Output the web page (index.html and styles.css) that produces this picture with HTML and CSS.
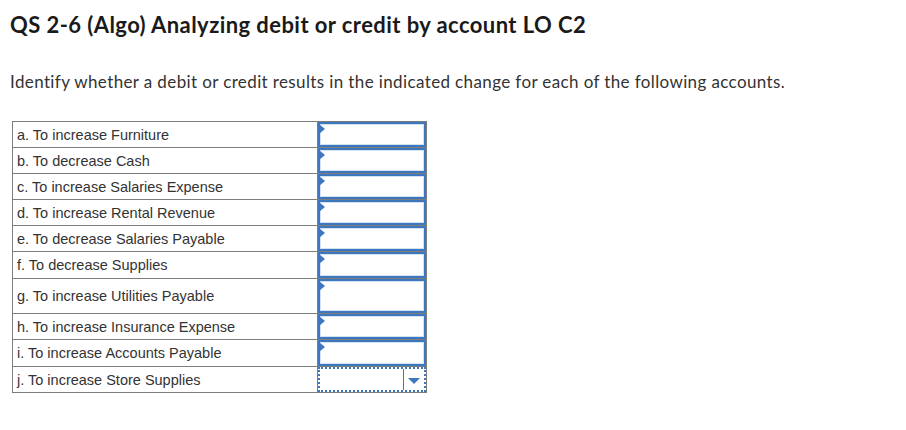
FILE: index.html
```html
<!DOCTYPE html>
<html>
<head>
<meta charset="utf-8">
<link rel="stylesheet" href="styles.css">
</head>
<body>
<h1 class="title">QS 2-6 (Algo) Analyzing debit or credit by account LO C2</h1>
<p class="intro">Identify whether a debit or credit results in the indicated change for each of the following accounts.</p>
<table class="grid">
  <tr class="row"><td class="label">a. To increase Furniture</td><td class="answer"><div class="box"><span class="flag"></span></div></td></tr>
  <tr class="row"><td class="label">b. To decrease Cash</td><td class="answer"><div class="box"><span class="flag"></span></div></td></tr>
  <tr class="row"><td class="label">c. To increase Salaries Expense</td><td class="answer"><div class="box"><span class="flag"></span></div></td></tr>
  <tr class="row"><td class="label">d. To increase Rental Revenue</td><td class="answer"><div class="box"><span class="flag"></span></div></td></tr>
  <tr class="row"><td class="label">e. To decrease Salaries Payable</td><td class="answer"><div class="box"><span class="flag"></span></div></td></tr>
  <tr class="row row-f"><td class="label">f. To decrease Supplies</td><td class="answer"><div class="box"><span class="flag"></span></div></td></tr>
  <tr class="row row-g"><td class="label">g. To increase Utilities Payable</td><td class="answer"><div class="box"><span class="flag"></span></div></td></tr>
  <tr class="row"><td class="label">h. To increase Insurance Expense</td><td class="answer"><div class="box"><span class="flag"></span></div></td></tr>
  <tr class="row row-i"><td class="label">i. To increase Accounts Payable</td><td class="answer"><div class="box"><span class="flag"></span></div></td></tr>
  <tr class="row"><td class="label">j. To increase Store Supplies</td><td class="answer"><div class="select"><span class="select-value"></span><span class="select-btn"><span class="caret"></span></span></div></td></tr>
</table>
</body>
</html>
```
FILE: styles.css
```css
html, body {
  margin: 0;
  padding: 0;
  background: #fff;
}
body {
  padding: 0 0 0 10px;
  font-family: "Liberation Sans", Arial, sans-serif;
  color: #333;
}
.title {
  margin: 0;
  padding-top: 12px;
  font-family: Lato, "Open Sans", sans-serif;
  font-weight: 700;
  font-size: 22px;
  line-height: 26px;
  color: #1a1a1a;
  letter-spacing: 0.43px;
}
.intro {
  margin: 0;
  padding-top: 34px;
  font-family: Lato, "Open Sans", sans-serif;
  font-size: 17px;
  line-height: 20px;
  color: #333;
  letter-spacing: 0.38px;
}
.grid {
  margin: 29px 0 0 2px;
  border-collapse: collapse;
  font-family: "Liberation Sans", Arial, sans-serif;
  font-size: 14.5px;
}
.row td {
  border: 1px solid #7d7d7d;
  padding: 0;
  height: 25px;
}
.row-f td { height: 26px; }
.row-g td { height: 34px; }
.row-i td { height: 26px; }
.label {
  width: 300px;
  padding: 0 0 0 4px !important;
  color: #333;
  vertical-align: middle;
}
.answer {
  width: 108px;
  vertical-align: top;
}
.box {
  position: relative;
  box-sizing: border-box;
  height: 100%;
  min-height: 25px;
  border: 2px solid #3d78bf;
  box-shadow: inset 0 0 0 1px #d2e2f4;
}
.row-f .box { min-height: 26px; }
.row-g .box { min-height: 34px; }
.row-i .box { min-height: 26px; }
.flag {
  position: absolute;
  left: -1px;
  top: 0;
  width: 0;
  height: 0;
  border-top: 5px solid transparent;
  border-bottom: 5px solid transparent;
  border-left: 6px solid #3d78bf;
}
.select {
  display: flex;
  box-sizing: border-box;
  height: 25px;
  border: 2px dotted #3d78bf;
}
.select-value {
  flex: 1;
}
.select-btn {
  width: 20px;
  border-left: 1px solid #3d78bf;
  display: flex;
  align-items: center;
  justify-content: center;
}
.caret {
  width: 0;
  height: 0;
  margin-top: 2px;
  border-left: 6px solid transparent;
  border-right: 6px solid transparent;
  border-top: 6px solid #3d78bf;
}
```
